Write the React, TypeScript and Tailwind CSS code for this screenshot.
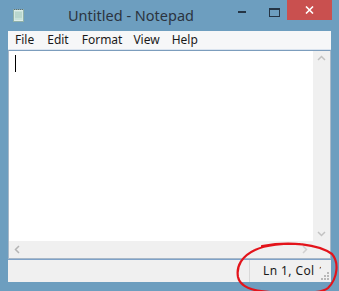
import React from "react";

export default function App() {
  const menus = ["File", "Edit", "Format", "View", "Help"];
  return (
    <div
      className="w-[339px] h-[291px] bg-[#6d9ebf] flex flex-col relative overflow-hidden"
      style={{ fontFamily: '"Noto Sans", "Open Sans", sans-serif' }}
    >
      {/* Title bar */}
      <div className="h-[31px] flex items-start shrink-0">
        <div className="ml-[13px] mt-[8px] w-[12px] h-[14px]">
          <svg width="12" height="14" viewBox="0 0 12 14">
            <rect x="0.5" y="1.5" width="10" height="12" fill="#dfeee9" stroke="#8fb0a8" />
            <rect x="1.5" y="3" width="8" height="9" fill="#c8e2da" />
            <path d="M1 1.5 H10" stroke="#5d6e7a" strokeDasharray="1 1" />
            <path d="M2 5 H9 M2 7 H9 M2 9 H9" stroke="#a9cbc1" />
          </svg>
        </div>
        <div className="ml-[43px] mt-[5px] text-[14.5px] leading-[20px] text-[#2b3440]">
          Untitled - Notepad
        </div>
        <div className="flex-1" />
        <div className="w-[24px] h-[20px] flex items-center justify-center mr-[13px]">
          <div className="w-[8px] h-[2px] bg-[#253545] mt-[4px]" />
        </div>
        <div className="w-[14px] h-[20px] flex items-start justify-center mr-[6px]">
          <div className="mt-[8px] w-[11px] h-[9px] border border-[#253545] border-t-2" />
        </div>
        <div className="w-[45px] h-[20px] bg-[#c9504f] flex items-center justify-center mr-[7px]">
          <svg width="9" height="8" viewBox="0 0 9 8">
            <path d="M1 0.5 L8 7.5 M8 0.5 L1 7.5" stroke="#ffffff" strokeWidth="1.6" />
          </svg>
        </div>
      </div>

      {/* Client area */}
      <div className="flex-1 mx-[8px] mb-[9px] flex flex-col bg-[#f0f0f0]">
        {/* Menu bar */}
        <div className="h-[19px] bg-[#f6f7f8] flex items-center text-[12px] leading-[16px] text-[#1a1a1a] border-b border-[#dae4ef] shrink-0">
          <span className="ml-[7px]">{menus[0]}</span>
          <span className="ml-[13px]">{menus[1]}</span>
          <span className="ml-[13px]">{menus[2]}</span>
          <span className="ml-[11px]">{menus[3]}</span>
          <span className="ml-[12px]">{menus[4]}</span>
        </div>

        {/* Edit area */}
        <div className="flex-1 flex flex-col border border-[#a8b8c8] border-t-[#7c9dbd] bg-white">
          <div className="flex-1 flex">
            <div className="flex-1 relative">
              <div className="absolute left-[6px] top-[4px] w-[1px] h-[17px] bg-black" />
            </div>
            <div className="w-[17px] bg-[#f0f0f0] flex flex-col items-center justify-between py-[4px]">
              <svg width="9" height="6" viewBox="0 0 9 6">
                <path d="M1 5 L4.5 1.5 L8 5" stroke="#c2c2c2" strokeWidth="1.5" fill="none" />
              </svg>
              <svg width="9" height="6" viewBox="0 0 9 6">
                <path d="M1 1 L4.5 4.5 L8 1" stroke="#c2c2c2" strokeWidth="1.5" fill="none" />
              </svg>
            </div>
          </div>
          <div className="h-[17px] flex shrink-0">
            <div className="flex-1 bg-[#f0f0f0] flex items-center justify-between px-[5px]">
              <svg width="6" height="9" viewBox="0 0 6 9">
                <path d="M5 1 L1.5 4.5 L5 8" stroke="#b5b5b5" strokeWidth="1.5" fill="none" />
              </svg>
              <svg width="6" height="9" viewBox="0 0 6 9">
                <path d="M1 1 L4.5 4.5 L1 8" stroke="#d0d0d0" strokeWidth="1.5" fill="none" />
              </svg>
            </div>
            <div className="w-[17px] bg-[#f0f0f0]" />
          </div>
        </div>

        {/* Status bar */}
        <div className="h-[23px] flex items-stretch border-t border-[#7fa2c8] bg-[#f0f0f0] shrink-0 relative">
          <div className="flex-1" />
          <div className="w-[82px] border-l border-[#d9d9d9] flex items-center">
            <div className="ml-[13px] flex items-center whitespace-nowrap text-[12px] tracking-[0.4px] text-[#1a1a1a]">
              <span>Ln 1, Col</span>
              <span className="ml-[4px] w-[2px] overflow-hidden">1</span>
            </div>
          </div>
          <div className="absolute right-[2px] bottom-[2px]">
            <svg width="8" height="8" viewBox="0 0 8 8">
              <rect x="6" y="0" width="2" height="2" fill="#b8b8b8" />
              <rect x="3" y="3" width="2" height="2" fill="#b8b8b8" />
              <rect x="6" y="3" width="2" height="2" fill="#b8b8b8" />
              <rect x="0" y="6" width="2" height="2" fill="#b8b8b8" />
              <rect x="3" y="6" width="2" height="2" fill="#b8b8b8" />
              <rect x="6" y="6" width="2" height="2" fill="#b8b8b8" />
            </svg>
          </div>
        </div>
      </div>

      {/* Red annotation ellipse */}
      <svg className="absolute left-0 top-0 pointer-events-none" width="339" height="291" viewBox="0 0 339 291">
        <path
          d="M262 246 C 290 241, 318 244, 332 254 C 339 262, 338 278, 328 288 C 322 293, 300 294, 270 292 C 250 291, 240 286, 238 277 C 236 266, 242 256, 255 250 C 265 245, 285 243, 300 244"
          stroke="#e3141b"
          strokeWidth="2.2"
          fill="none"
          strokeLinecap="round"
        />
      </svg>
    </div>
  );
}
